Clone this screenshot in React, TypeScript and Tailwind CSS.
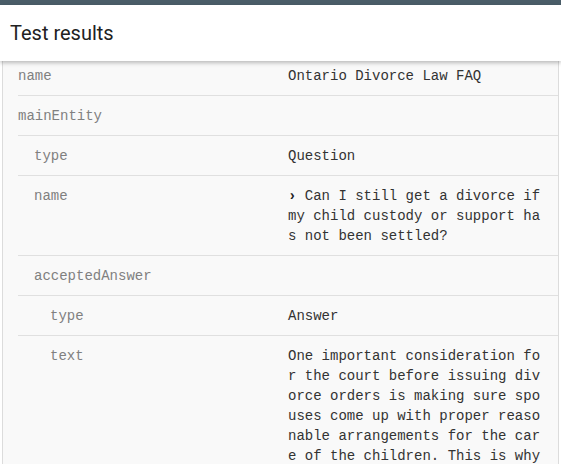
const rows = [
  { key: "name", depth: 0, value: "Ontario Divorce Law FAQ" },
  { key: "mainEntity", depth: 0, value: "" },
  { key: "type", depth: 1, value: "Question" },
  {
    key: "name",
    depth: 1,
    chevron: true,
    value: " Can I still get a divorce if my child custody or support has not been settled?",
  },
  { key: "acceptedAnswer", depth: 1, value: "" },
  { key: "type", depth: 2, value: "Answer" },
  {
    key: "text",
    depth: 2,
    value:
      "One important consideration for the court before issuing divorce orders is making sure spouses come up with proper reasonable arrangements for the care of the children. This is why the court may refuse to grant a divorce.",
  },
];

const indent = ["pl-0", "pl-4", "pl-8"];

export default function App() {
  return (
    <div className="h-[464px] w-[561px] overflow-hidden bg-white font-['Roboto',sans-serif]">
      <div className="h-[5px] bg-[#4a5d68]" />
      <div className="relative z-10 flex h-[56px] items-center bg-white px-[10px] shadow-[0_2px_4px_rgba(0,0,0,0.25)]">
        <h1 className="text-[20px] leading-none text-[#212121]">Test results</h1>
      </div>
      <div className="mx-[2px] h-full border-x border-[#dcdcdc] bg-[#f9f9f9] pl-[15px] font-['Liberation_Mono',monospace] text-[14px] leading-[20px]">
        {rows.map((row, i) => (
          <div
            key={i}
            className={`flex border-b border-[#e0e0e0] pb-[9px] ${i === 0 ? "pt-[5px]" : "pt-[10px]"}`}
          >
            <div className={`w-[270px] shrink-0 text-[#808080] ${indent[row.depth]}`}>{row.key}</div>
            <div className="w-[256px] break-all text-[#333333]">
              {row.chevron && <span className="font-bold text-[#222]">›</span>}
              {row.value}
            </div>
          </div>
        ))}
      </div>
    </div>
  );
}
